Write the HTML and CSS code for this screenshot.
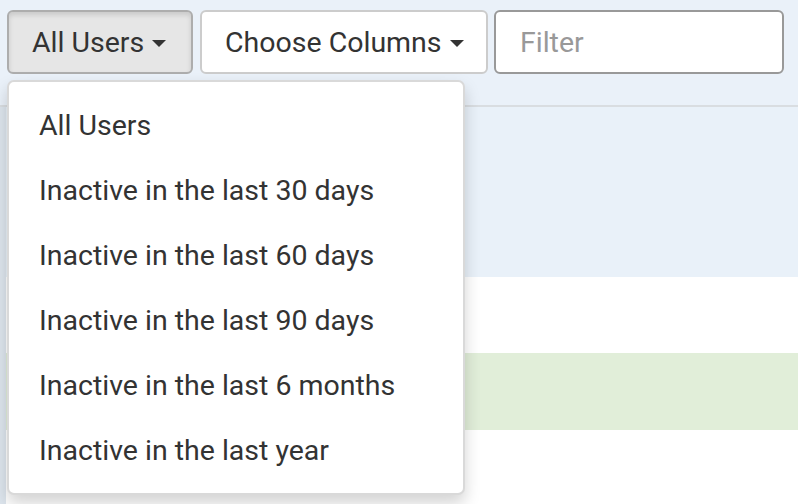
FILE: index.html
```html
<!DOCTYPE html>
<html>
<head>
<meta charset="utf-8">
<link rel="stylesheet" href="styles.css">
</head>
<body>
<div class="page">
  <div class="toolbar">
    <button class="btn btn-active">All Users<span class="caret"></span></button>
    <button class="btn btn-cols">Choose Columns<span class="caret"></span></button>
    <input class="filter" type="text" placeholder="Filter">
  </div>
  <div class="table">
    <div class="row row-info"></div>
    <div class="row row-white"></div>
    <div class="row row-success"></div>
    <div class="row row-white row-last"></div>
  </div>
  <ul class="menu">
    <li>All Users</li>
    <li>Inactive in the last 30 days</li>
    <li>Inactive in the last 60 days</li>
    <li>Inactive in the last 90 days</li>
    <li>Inactive in the last 6 months</li>
    <li>Inactive in the last year</li>
  </ul>
</div>
</body>
</html>
```
FILE: styles.css
```css
html, body {
  margin: 0;
  padding: 0;
}
body {
  font-family: Roboto, "Liberation Sans", sans-serif;
  color: #333;
  width: 798px;
  height: 504px;
  overflow: hidden;
  background: #fff;
}
.page {
  position: relative;
  height: 504px;
}
.toolbar {
  display: flex;
  align-items: flex-start;
  height: 107px;
  padding: 10px 0 0 7px;
  box-sizing: border-box;
  background: #eaf1f9;
  border-bottom: 2px solid #d9dde1;
}
.btn {
  font-family: inherit;
  font-size: 28.5px;
  color: #333;
  height: 64px;
  box-sizing: border-box;
  border-radius: 6px;
  border: 2px solid #ccc;
  background: #fff;
  display: flex;
  align-items: center;
  padding: 0 0 0 23px;
  margin: 0;
}
.btn-active {
  width: 186px;
  background: #e6e6e6;
  border-color: #adadad;
  box-shadow: inset 0 3px 5px rgba(0,0,0,0.125);
}
.btn-cols {
  width: 288px;
  margin-left: 7px;
}
.caret {
  display: inline-block;
  width: 0;
  height: 0;
  border-top: 7px solid #333;
  border-left: 7px solid transparent;
  border-right: 7px solid transparent;
  margin-left: 8px;
  margin-top: 2px;
}
.filter {
  font-family: inherit;
  font-size: 28.5px;
  width: 290px;
  height: 64px;
  box-sizing: border-box;
  margin: 0 0 0 6px;
  border: 2px solid #999;
  border-radius: 6px;
  padding: 0 0 0 24px;
  color: #333;
  background: #fff;
  outline: none;
}
.filter::placeholder {
  color: #999;
}
.table {
  border-left: 6px solid #dde5ed;
}
.row-info {
  height: 170px;
  background: #e9f1f9;
}
.row-white {
  height: 76px;
  background: #fff;
}
.row-success {
  height: 77px;
  background: #e1eed9;
}
.row-last {
  height: 80px;
}
.menu {
  position: absolute;
  top: 80px;
  left: 7px;
  width: 458px;
  margin: 0;
  padding: 11px 0 10px;
  list-style: none;
  box-sizing: border-box;
  background: #fff;
  border: 2px solid rgba(0,0,0,0.15);
  border-radius: 7px;
  box-shadow: 0 8px 16px rgba(0,0,0,0.175);
}
.menu li {
  height: 65px;
  line-height: 65px;
  padding-left: 30px;
  font-size: 28.5px;
  color: #333;
  white-space: nowrap;
}
```
